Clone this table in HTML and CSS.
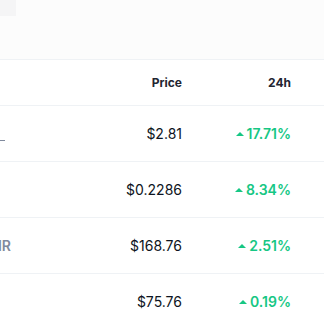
FILE: index.html
```html
<!DOCTYPE html>
<html>
<head>
<meta charset="utf-8">
<link rel="stylesheet" href="styles.css">
</head>
<body>
<div class="top"><div class="chip"></div></div>
<div class="table">
  <div class="row head">
    <div class="name"></div>
    <div class="price">Price</div>
    <div class="change">24h</div>
  </div>
  <div class="row">
    <div class="name"><span class="sym link">SOL</span></div>
    <div class="price">$2.81</div>
    <div class="change"><span class="caret"></span>17.71%</div>
  </div>
  <div class="row">
    <div class="name"></div>
    <div class="price">$0.2286</div>
    <div class="change"><span class="caret"></span>8.34%</div>
  </div>
  <div class="row">
    <div class="name"><span class="sym">MIR</span></div>
    <div class="price">$168.76</div>
    <div class="change"><span class="caret"></span>2.51%</div>
  </div>
  <div class="row">
    <div class="name"></div>
    <div class="price">$75.76</div>
    <div class="change"><span class="caret"></span>0.19%</div>
  </div>
</div>
</body>
</html>
```

FILE: styles.css
```css
html, body {
  margin: 0;
  padding: 0;
  background: #ffffff;
  font-family: Inter, "Noto Sans", sans-serif;
  color: #0d1421;
  overflow: hidden;
}
.top {
  height: 60px;
  background: #fcfcfc;
  border-bottom: 1px solid #eff2f5;
  box-sizing: border-box;
}
.chip {
  width: 16px;
  height: 16px;
  background: #f5f5f6;
}
.row {
  display: flex;
  align-items: center;
  height: 56px;
  border-bottom: 1px solid #eff2f5;
  box-sizing: border-box;
  padding-right: 33px;
  font-size: 14px;
}
.row.head {
  height: 46px;
  font-size: 12px;
  font-weight: 700;
  color: #222531;
}
.name {
  width: 11px;
  display: flex;
  justify-content: flex-end;
  white-space: nowrap;
}
.sym {
  color: #808a9d;
  font-weight: 600;
  font-size: 14px;
}
.sym.link {
  color: transparent;
  text-decoration: underline;
  text-decoration-color: #808a9d;
  margin-right: 6px;
}
.price {
  flex: 1;
  text-align: right;
  white-space: nowrap;
}
.change {
  width: 109px;
  display: flex;
  justify-content: flex-end;
  align-items: center;
  white-space: nowrap;
  color: #16c784;
  font-weight: 600;
}
.head .change {
  color: #222531;
  font-weight: 700;
}
.caret {
  width: 0;
  height: 0;
  border-left: 4px solid transparent;
  border-right: 4px solid transparent;
  border-bottom: 4px solid #16c784;
  margin-right: 3px;
}
```
